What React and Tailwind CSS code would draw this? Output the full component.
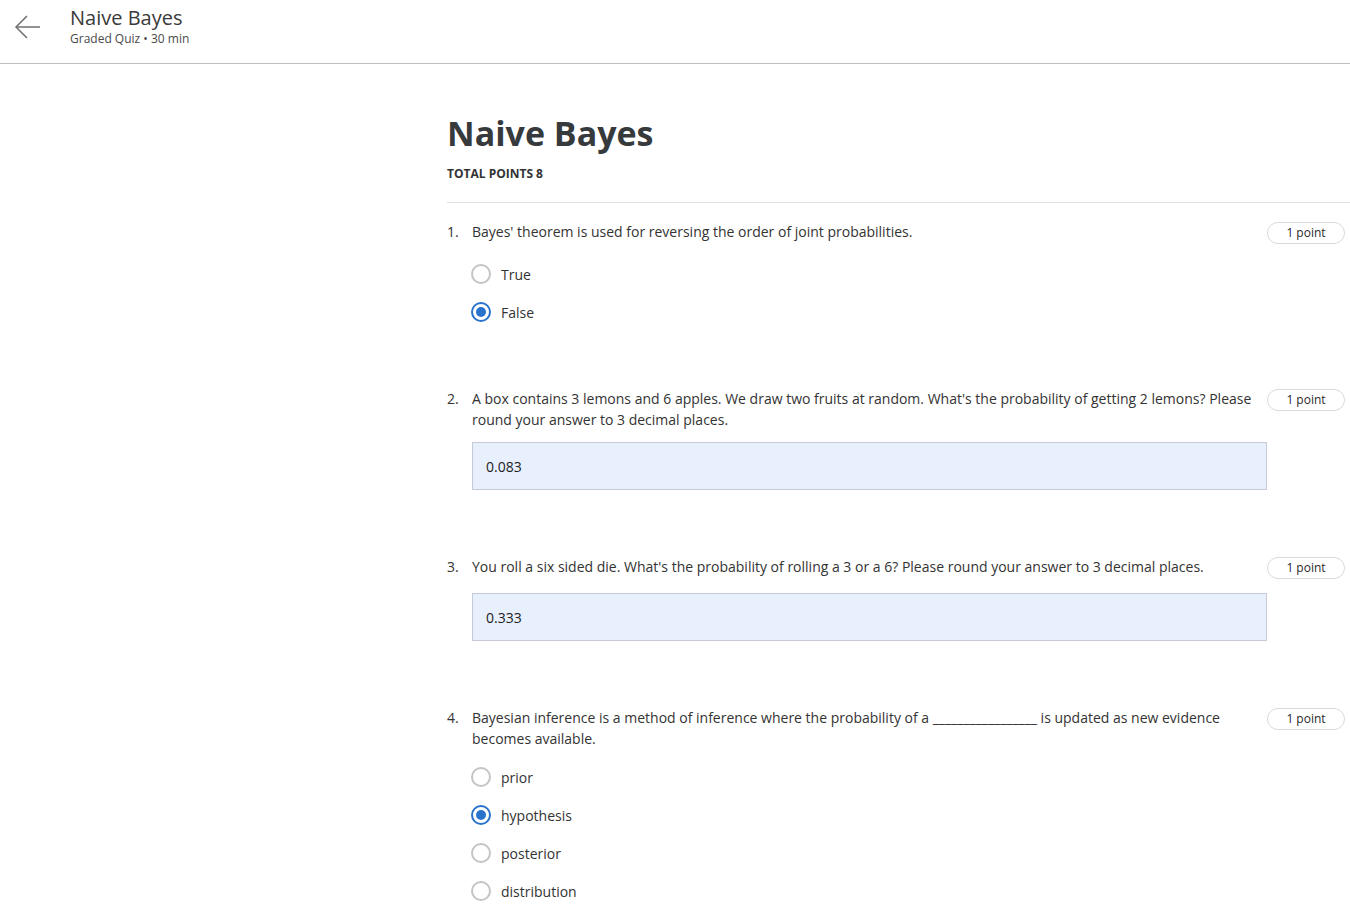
import React from "react"

const font = { fontFamily: "'Open Sans', 'Liberation Sans', sans-serif" }

const Radio = ({ checked }) => (
    <div
        className={
            "w-[20px] h-[20px] rounded-full border-2 flex items-center justify-center shrink-0 " +
            (checked ? "border-[#2a73cc]" : "border-[#c4c4c4]")
        }
    >
        {checked && <div className="w-[10px] h-[10px] rounded-full bg-[#2a73cc]"></div>}
    </div>
)

const PointPill = () => (
    <div className="h-[25px] mr-[5px] shrink-0">
        <div className="mt-[1px] w-[78px] h-[22px] rounded-full border border-[#dadada] text-[12px] text-[#2a2a2a] flex items-center justify-center">
            1 point
        </div>
    </div>
)

const Question = ({ num, text, children }) => (
    <div>
        <div className="flex items-start">
            <div className="flex flex-1 text-[14px] leading-[21px] text-[#333]">
                <div className="w-[25px] shrink-0">{num}.</div>
                <div className="pr-[6px]">{text}</div>
            </div>
            <PointPill />
        </div>
        <div className="w-[820px] pl-[25px]">{children}</div>
    </div>
)

const Options = ({ items, selected }) => (
    <div className="mt-[18px] flex flex-col gap-[18px]">
        {items.map((item) => (
            <div key={item} className="flex items-center gap-[10px] h-[20px] -ml-[1px]">
                <Radio checked={item === selected} />
                <span className="text-[14px] text-[#333]">{item}</span>
            </div>
        ))}
    </div>
)

const Answer = ({ value }) => (
    <div className="mt-[12px] h-[48px] bg-[#e8f0fe] border border-[#c5cad6] flex items-center pl-[13px] text-[14px] text-[#222]">
        {value}
    </div>
)

export default function App() {
    return (
        <div className="min-h-screen bg-white" style={font}>
            <header className="h-[64px] border-b border-[#bdbdbd] flex items-start">
                <div className="w-[70px] h-[54px] flex items-center pl-[14px]">
                    <svg width="28" height="26" viewBox="0 0 28 26" fill="none" stroke="#6f6f6f" strokeWidth="1.5">
                        <line x1="2" y1="13" x2="26" y2="13" />
                        <polyline points="13,2 2,13 13,24" />
                    </svg>
                </div>
                <div className="pt-[5px]">
                    <div className="text-[20px] leading-[26px] text-[#3a3a3a]">Naive Bayes</div>
                    <div className="text-[12px] leading-[16px] text-[#4a4a4a]">Graded Quiz • 30 min</div>
                </div>
            </header>

            <main className="pl-[447px]">
                <h1 className="mt-[46px] text-[34px] leading-[46px] font-bold text-[#373a3c]">Naive Bayes</h1>
                <div className="mt-[10px] text-[12px] leading-[16px] font-bold text-[#333]">TOTAL POINTS 8</div>
                <div className="mt-[20px] border-t border-[#e0e0e0]"></div>

                <div className="pt-[18px] flex flex-col gap-[66px]">
                    <Question num={1} text="Bayes' theorem is used for reversing the order of joint probabilities.">
                        <Options items={["True", "False"]} selected="False" />
                    </Question>

                    <Question
                        num={2}
                        text="A box contains 3 lemons and 6 apples. We draw two fruits at random. What's the probability of getting 2 lemons? Please round your answer to 3 decimal places."
                    >
                        <Answer value="0.083" />
                    </Question>

                    <Question
                        num={3}
                        text="You roll a six sided die. What's the probability of rolling a 3 or a 6? Please round your answer to 3 decimal places."
                    >
                        <Answer value="0.333" />
                    </Question>

                    <Question
                        num={4}
                        text="Bayesian inference is a method of inference where the probability of a _________________ is updated as new evidence becomes available."
                    >
                        <Options items={["prior", "hypothesis", "posterior", "distribution"]} selected="hypothesis" />
                    </Question>
                </div>
                <div className="h-[40px]"></div>
            </main>
        </div>
    )
}
